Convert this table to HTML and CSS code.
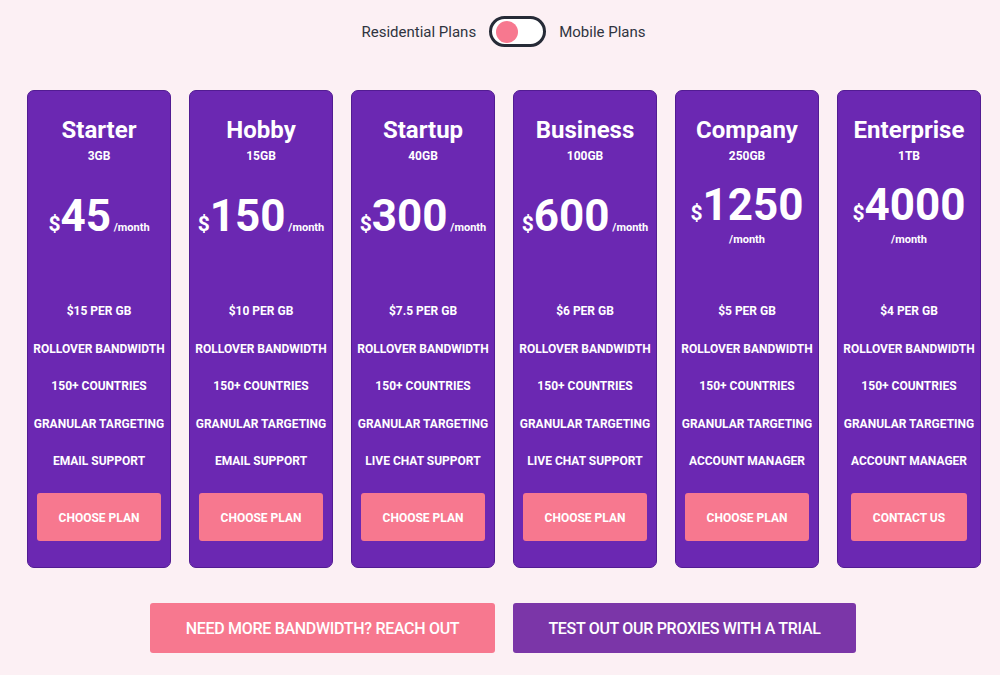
FILE: index.html
```html
<!DOCTYPE html>
<html lang="en">
<head>
    <meta charset="UTF-8"/>
    <meta name="viewport" content="width=device-width, initial-scale=1.0"/>
    <title>Proxy Pricing</title>
    <link rel="stylesheet" href="styles.css">
</head>
<body>
<div class="page">
    <!-- plan type switch -->
    <div class="plan-switch">
        <span class="switch-label">Residential Plans</span>
        <span class="switch"><span class="knob"></span></span>
        <span class="switch-label">Mobile Plans</span>
    </div>

    <!-- pricing cards -->
    <div class="cards">
        <div class="card">
            <h2 class="card-title">Starter</h2>
            <p class="card-size">3GB</p>
            <div class="price"><p class="price-line"><span class="cur">$</span><span class="amt">45</span> <span class="per">/month</span></p></div>
            <ul class="features">
                <li>$15 per GB</li>
                <li>Rollover bandwidth</li>
                <li>150+ countries</li>
                <li>Granular targeting</li>
                <li>Email support</li>
            </ul>
            <button class="card-btn">Choose plan</button>
        </div>

        <div class="card">
            <h2 class="card-title">Hobby</h2>
            <p class="card-size">15GB</p>
            <div class="price"><p class="price-line"><span class="cur">$</span><span class="amt">150</span> <span class="per">/month</span></p></div>
            <ul class="features">
                <li>$10 per GB</li>
                <li>Rollover bandwidth</li>
                <li>150+ countries</li>
                <li>Granular targeting</li>
                <li>Email support</li>
            </ul>
            <button class="card-btn">Choose plan</button>
        </div>

        <div class="card">
            <h2 class="card-title">Startup</h2>
            <p class="card-size">40GB</p>
            <div class="price"><p class="price-line"><span class="cur">$</span><span class="amt">300</span> <span class="per">/month</span></p></div>
            <ul class="features">
                <li>$7.5 per GB</li>
                <li>Rollover bandwidth</li>
                <li>150+ countries</li>
                <li>Granular targeting</li>
                <li>Live chat support</li>
            </ul>
            <button class="card-btn">Choose plan</button>
        </div>

        <div class="card">
            <h2 class="card-title">Business</h2>
            <p class="card-size">100GB</p>
            <div class="price"><p class="price-line"><span class="cur">$</span><span class="amt">600</span> <span class="per">/month</span></p></div>
            <ul class="features">
                <li>$6 per GB</li>
                <li>Rollover bandwidth</li>
                <li>150+ countries</li>
                <li>Granular targeting</li>
                <li>Live chat support</li>
            </ul>
            <button class="card-btn">Choose plan</button>
        </div>

        <div class="card">
            <h2 class="card-title">Company</h2>
            <p class="card-size">250GB</p>
            <div class="price"><p class="price-line"><span class="cur">$</span><span class="amt">1250</span> <span class="per">/month</span></p></div>
            <ul class="features">
                <li>$5 per GB</li>
                <li>Rollover bandwidth</li>
                <li>150+ countries</li>
                <li>Granular targeting</li>
                <li>Account manager</li>
            </ul>
            <button class="card-btn">Choose plan</button>
        </div>

        <div class="card">
            <h2 class="card-title">Enterprise</h2>
            <p class="card-size">1TB</p>
            <div class="price"><p class="price-line"><span class="cur">$</span><span class="amt">4000</span> <span class="per">/month</span></p></div>
            <ul class="features">
                <li>$4 per GB</li>
                <li>Rollover bandwidth</li>
                <li>150+ countries</li>
                <li>Granular targeting</li>
                <li>Account manager</li>
            </ul>
            <button class="card-btn">Contact us</button>
        </div>
    </div>

    <!-- bottom call to action -->
    <div class="cta-row">
        <button class="cta cta-pink">Need more bandwidth? Reach out</button>
        <button class="cta cta-purple">Test out our proxies with a trial</button>
    </div>
</div>
</body>
</html>
```

FILE: styles.css
```css
:root {
    --page-bg: #fcf0f4;
    --card-bg: #6b28b2;
    --card-border: #521c92;
    --pink: #f7788f;
    --purple: #7b36a8;
    --label: #2f3440;
}

* {
    margin: 0;
    padding: 0;
    box-sizing: border-box;
}

body {
    font-family: Roboto, "Liberation Sans", sans-serif;
    background-color: var(--page-bg);
    color: #ffffff;
}

.page {
    width: 1000px;
    padding-top: 16px;
}

/* plan type switch */
.plan-switch {
    display: flex;
    justify-content: center;
    align-items: center;
    gap: 13px;
    padding-left: 7px;
}

.switch-label {
    font-size: 15px;
    color: var(--label);
}

.switch {
    display: flex;
    align-items: center;
    width: 57px;
    height: 31px;
    border: 3px solid #262b37;
    border-radius: 16px;
    background-color: #ffffff;
    padding-left: 4px;
}

.knob {
    width: 22px;
    height: 22px;
    border-radius: 50%;
    background-color: var(--pink);
}

/* cards */
.cards {
    display: flex;
    gap: 18px;
    margin-top: 43px;
    padding-left: 27px;
}

.card {
    width: 144px;
    height: 478px;
    background-color: var(--card-bg);
    border: 1px solid var(--card-border);
    border-radius: 7px;
    padding: 25px 5px 0;
    display: flex;
    flex-direction: column;
    align-items: center;
    text-align: center;
}

.card-title {
    font-size: 24px;
    font-weight: 700;
    line-height: 28px;
}

.card-size {
    font-size: 12px;
    font-weight: 700;
    line-height: 14px;
    margin-top: 5px;
}

.price {
    height: 96px;
    margin-top: 5px;
    margin-bottom: 29px;
    display: flex;
    align-items: center;
    justify-content: center;
    width: 100%;
}

.price-line {
    font-size: 11px;
    line-height: 22px;
    font-weight: 700;
}

.cur {
    font-size: 21px;
}

.amt {
    font-size: 44px;
    line-height: 48px;
}

.features {
    list-style: none;
    width: 100%;
}

.features li {
    font-size: 12px;
    font-weight: 700;
    text-transform: uppercase;
    line-height: 37.5px;
    white-space: nowrap;
}

.card-btn {
    margin-top: 12px;
    height: 48px;
    padding: 3px 22px 0;
    border: none;
    border-radius: 3px;
    background-color: var(--pink);
    color: #ffffff;
    font-family: inherit;
    font-size: 12px;
    font-weight: 700;
    text-transform: uppercase;
}

/* bottom call to action */
.cta-row {
    display: flex;
    justify-content: center;
    gap: 18px;
    margin-top: 35px;
    padding-left: 6px;
}

.cta {
    height: 50px;
    border: none;
    border-radius: 3px;
    color: #ffffff;
    font-family: inherit;
    font-size: 16px;
    font-weight: 500;
    letter-spacing: -0.3px;
    text-transform: uppercase;
}

.cta-pink {
    width: 345px;
    background-color: var(--pink);
}

.cta-purple {
    width: 343px;
    background-color: var(--purple);
}
```
